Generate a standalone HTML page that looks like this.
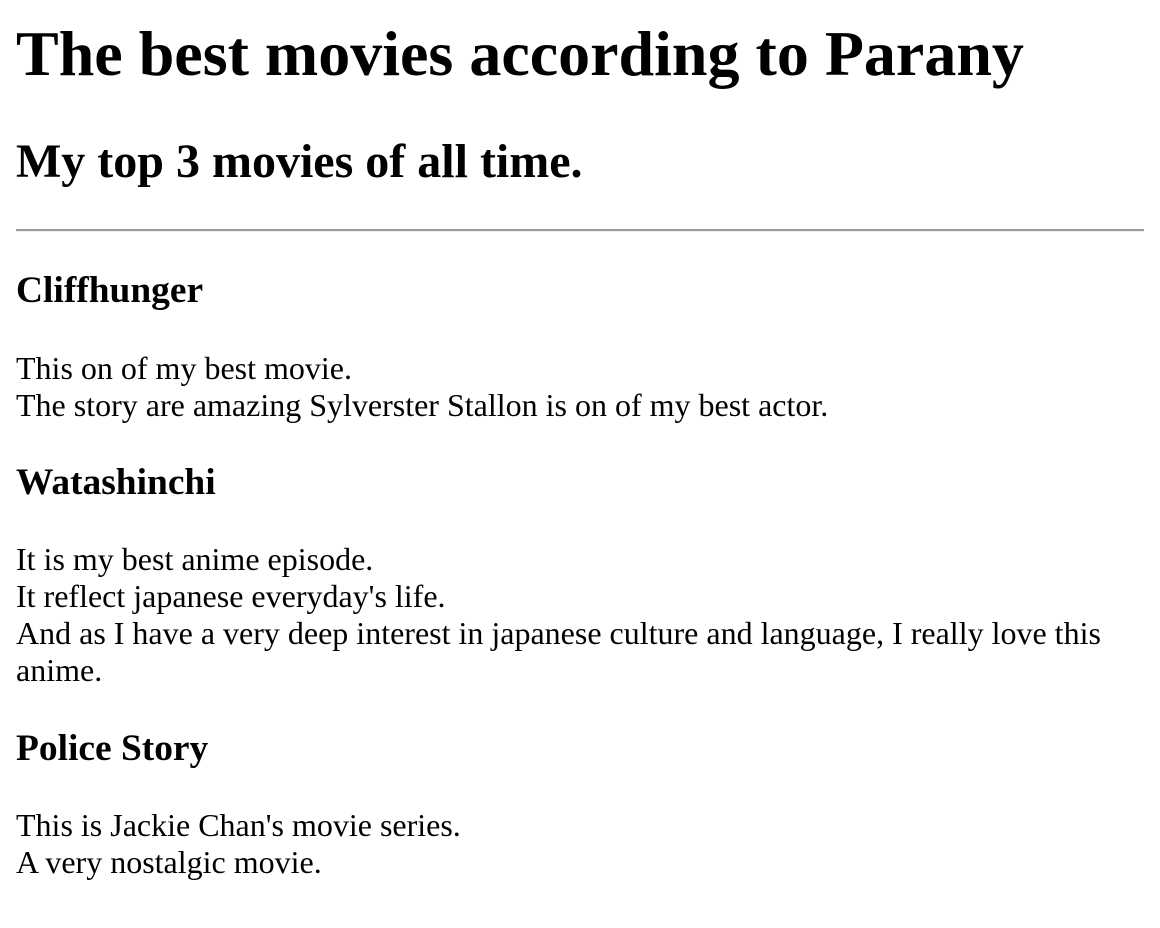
<!DOCTYPE html>
<html><head><meta charset="utf-8"><style>
html,body{margin:0;padding:0;background:#fff;}
body{margin:0 16px;font-family:"Liberation Serif",serif;font-size:32px;color:#000;}
h1{font-size:64px;margin:17px 0 42.88px;font-weight:bold;}
h2{font-size:48px;margin:39.84px 0;font-weight:bold;}
h3{font-size:37.44px;margin:37.44px 0;font-weight:bold;}
p{margin:32px 0;}
hr{margin:16px 0;border:none;border-top:2px solid #9a9a9a;border-bottom:1px solid #eee;height:0;}
</style></head><body>
<h1>The best movies according to Parany</h1>
<h2>My top 3 movies of all time.</h2>
<hr>
<h3>Cliffhunger</h3>
<p>This on of my best movie.<br>The story are amazing Sylverster Stallon is on of my best actor.</p>
<h3>Watashinchi</h3>
<p>It is my best anime episode.<br>It reflect japanese everyday's life.<br>And as I have a very deep interest in japanese culture and language, I really love this anime.</p>
<h3>Police Story</h3>
<p>This is Jackie Chan's movie series.<br>A very nostalgic movie.</p>
</body></html>
